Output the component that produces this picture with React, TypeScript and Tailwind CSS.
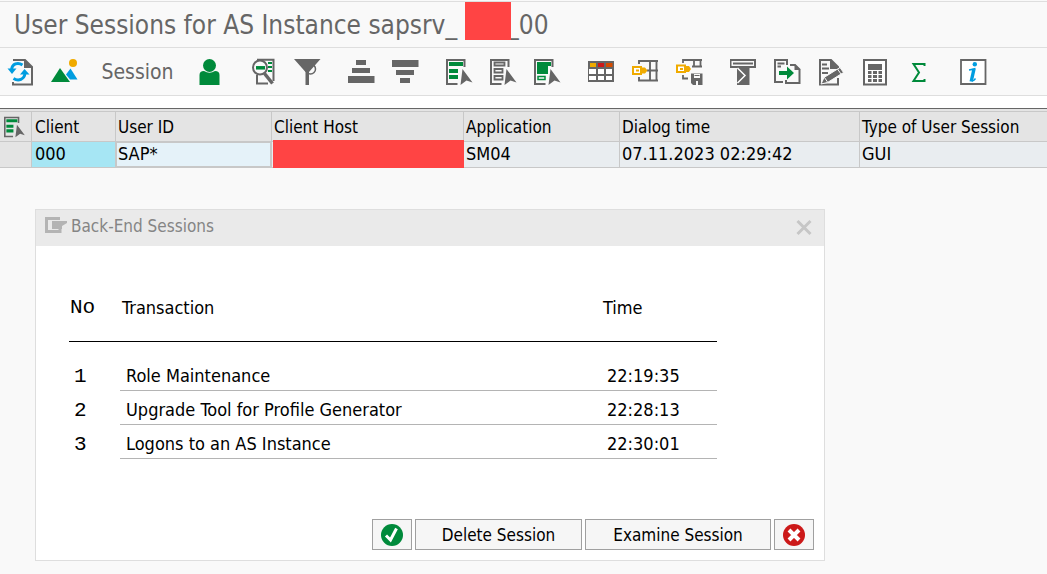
import React from 'react'

const Icon = ({ children }: { children: React.ReactNode }) => (
  <svg width="28" height="28" viewBox="0 0 28 28" fill="none" aria-hidden="true">
    {children}
  </svg>
)

const gray = '#666666'
const green = '#008a3b'
const blue = '#009de0'
const amber = '#f0ab00'

const Cursor = () => (
  <path d="M16.5 11L26.5 24.5L20.5 22.5L14.5 27Z" fill={gray} />
)

const SheetOutline = () => (
  <path d="M18.5 9V2H1V26H11.5" stroke={gray} strokeWidth="2" />
)

const RefreshIcon = () => (
  <Icon>
    <path d="M6 2H18L25 9V26.500H6V24" stroke={gray} strokeWidth="2" />
    <path d="M17 1L26 10H17Z" fill={gray} />
    <path d="M4.500 12C5 5.500 11 4 15.500 7" stroke={blue} strokeWidth="3" />
    <path d="M0.500 10.500H9.500L5 16Z" fill={blue} />
    <path d="M18 15C17.500 21.500 11.500 23.500 6.500 20.500" stroke={blue} strokeWidth="3" />
    <path d="M13 16.500H22.500L17.500 11Z" fill={blue} />
  </Icon>
)

const PictureIcon = () => (
  <Icon>
    <path d="M0 24L9 10L19 24Z" fill={green} />
    <path d="M15 16.500L19.500 10.500L26.500 21.500H19Z" fill={blue} />
    <circle cx="22" cy="5" r="4" fill={amber} />
  </Icon>
)

const UserIcon = () => (
  <Icon>
    <circle cx="13.500" cy="7.500" r="6.500" fill={green} />
    <path d="M3.500 27V17Q3.500 13 8 13Q13.500 16.500 19 13Q23.500 13 23.500 17V27Z" fill={green} />
  </Icon>
)

const DetailsIcon = () => (
  <Icon>
    <path d="M7 1.800H23.500V23M7 17V25.500H18" stroke={gray} strokeWidth="2" />
    <path d="M18 5H22M18 9H22M18 13H22" stroke={green} strokeWidth="2" />
    <circle cx="10" cy="9.500" r="7" fill="#f9f9f9" stroke={gray} strokeWidth="2" />
    <path d="M6 9.800H15" stroke={green} strokeWidth="3.500" />
    <path d="M14.500 15.500L22.500 25.500" stroke={gray} strokeWidth="3.500" />
  </Icon>
)

const FilterIcon = () => (
  <Icon>
    <circle cx="16.500" cy="11" r="5" stroke={gray} strokeWidth="1.500" />
    <path d="M0 1H26.500L15 14V27H11.500V14Z" fill={gray} />
  </Icon>
)

const AscendingIcon = () => (
  <Icon>
    <path d="M8 2H18V7H8ZM4 10H22V15H4ZM0 18H26.500V25H0Z" fill={gray} />
  </Icon>
)

const DescendingIcon = () => (
  <Icon>
    <path d="M0 2H26.500V9H0ZM4 12H22V17H4ZM8 20H18V25H8Z" fill={gray} />
  </Icon>
)

const SelectAllIcon = () => (
  <Icon>
    <SheetOutline />
    <path d="M3 4H17V8H3ZM3 11H12V15H3ZM3 17H12V21H3Z" fill={green} />
    <Cursor />
  </Icon>
)

const DeselectAllIcon = () => (
  <Icon>
    <SheetOutline />
    <path d="M4.500 4.500H14.500V7.500H4.500ZM4.500 11H12.500V14.500H4.500ZM4.500 18H12.500V21.500H4.500Z" stroke={gray} strokeWidth="1.800" />
    <Cursor />
  </Icon>
)

const SelectBlockIcon = () => (
  <Icon>
    <SheetOutline />
    <path d="M3 4H17V8H14V16H3Z" fill={green} />
    <path d="M4 18.500H11V21.500H4Z" stroke={green} strokeWidth="1.500" />
    <Cursor />
  </Icon>
)

const LayoutIcon = () => (
  <Icon>
    <path d="M-1 3H26V24H-1Z" fill={gray} />
    <path d="M2 5H8V9H2Z" fill={amber} />
    <path d="M10 5H16V9H10Z" fill="#cc1919" />
    <path d="M18 5H24.500V9H18Z" fill="#d64c00" />
    <path d="M1 11H8V16H1ZM10 11H16V16H10ZM18 11H24V16H18ZM1 18H8V22H1ZM10 18H16V22H10ZM18 18H24V22H18Z" fill="#fff" />
  </Icon>
)

const ChooseLayoutIcon = () => (
  <Icon>
    <path d="M7 6V3H26M7 19V22.500H26M15 12.500H26M18 2V23M24.500 2V23" stroke={gray} strokeWidth="1.900" />
    <path d="M1 9H9V16H1Z" fill="#fff" stroke={amber} strokeWidth="2" />
    <path d="M4 11.500H7V13.500H4ZM9 9.500H13L15.500 12.500L13 15.500H9Z" fill={amber} />
  </Icon>
)

const SaveLayoutIcon = () => (
  <Icon>
    <path d="M7 5V2H26M18 1V8M24.500 1V9M16 8.500H26M7 17V20.500H12" stroke={gray} strokeWidth="1.800" />
    <path d="M1 7.500H9V14H1Z" fill="#fff" stroke={amber} strokeWidth="2" />
    <path d="M4 10H7V12H4ZM9 8H13L15 11L13 14H9Z" fill={amber} />
    <path d="M15 15.500H26.500V27H17L15 25Z" fill={gray} />
    <path d="M18 16H24V20H18ZM20 23H22V27H20Z" fill="#f9f9f9" />
    <path d="M18.500 17.500H23.500" stroke={gray} />
  </Icon>
)

const PrintIcon = () => (
  <Icon>
    <path d="M0.500 2H25V9H0.500Z" stroke={gray} strokeWidth="2" />
    <path d="M3 5.500H23" stroke={gray} strokeWidth="2" />
    <path d="M7 8H19.500V27H7Z" fill={gray} />
    <path d="M7.500 10L15 17.500L7.500 25" stroke="#fff" strokeWidth="1.500" />
  </Icon>
)

const ExportIcon = () => (
  <Icon>
    <path d="M13 7V2H1V24H9M3.500 5.500H10.500M3.500 8.500H7" stroke={gray} strokeWidth="2" />
    <path d="M16 7H21L25.500 11.500V25H12V22" stroke={gray} strokeWidth="2" />
    <path d="M20.500 6L26.500 12H20.500Z" fill={gray} />
    <path d="M5 13H13V8.500L20 15L13 21.500V17H5Z" fill={green} />
  </Icon>
)

const EditIcon = () => (
  <Icon>
    <path d="M20 12V9L13 2H2V26.500H20V20" stroke={gray} strokeWidth="2" />
    <path d="M12 1L21 11H12ZM4 5.500H9V7.500H4ZM4 9.500H11V11.500H4ZM4 14H10V16H4Z" fill={gray} />
    <path d="M3 26L6 19.500L22 9.500L25.500 14.500L9.500 24.500Z" fill={gray} stroke="#f9f9f9" />
    <path d="M6.500 19.500L9.500 24M19.500 11L23 16" stroke="#f9f9f9" />
  </Icon>
)

const CalculatorIcon = () => (
  <Icon>
    <path d="M2 2H24V26.500H2Z" fill="#fff" stroke={gray} strokeWidth="2" />
    <path d="M6 6H20V12H6Z" fill={gray} />
    <path d="M6 13H9.500V16H6ZM11 13H15V16H11ZM16.500 13H20V16H16.500ZM6 17H9.500V20H6ZM11 17H15V20H11ZM16.500 17H20V20H16.500ZM6 21H9.500V24H6ZM11 21H15V24H11ZM16.500 21H20V24H16.500Z" fill={gray} />
  </Icon>
)

const SumIcon = () => (
  <Icon>
    <path d="M18.500 8V6H7.500L13 14.500L7.500 23H18.500V21" stroke={green} strokeWidth="2" />
  </Icon>
)

const InfoIcon = () => (
  <Icon>
    <path d="M1 2H25.500V26H1Z" fill="#fff" stroke={gray} strokeWidth="1.800" />
    <circle cx="14.800" cy="6.300" r="2.200" fill={blue} />
    <path d="M9 12Q12.500 11.500 15.500 10.500M11.500 22Q13 24 15.500 20.500" stroke={blue} strokeWidth="1.400" />
    <path d="M14 11L11.200 23.500" stroke={blue} strokeWidth="3.400" />
  </Icon>
)

interface Tool {
  label: string;
  icon: () => React.JSX.Element;
}

const leadingTools: Tool[] = [
  { label: 'Refresh', icon: RefreshIcon },
  { label: 'Display', icon: PictureIcon },
]

const toolGroups: Tool[][] = [
  [{ label: 'User', icon: UserIcon }],
  [
    { label: 'Details', icon: DetailsIcon },
    { label: 'Filter', icon: FilterIcon },
  ],
  [
    { label: 'Sort ascending', icon: AscendingIcon },
    { label: 'Sort descending', icon: DescendingIcon },
  ],
  [
    { label: 'Select all', icon: SelectAllIcon },
    { label: 'Deselect all', icon: DeselectAllIcon },
    { label: 'Select block', icon: SelectBlockIcon },
  ],
  [
    { label: 'Change layout', icon: LayoutIcon },
    { label: 'Choose layout', icon: ChooseLayoutIcon },
    { label: 'Save layout', icon: SaveLayoutIcon },
  ],
  [
    { label: 'Print', icon: PrintIcon },
    { label: 'Export', icon: ExportIcon },
    { label: 'Edit', icon: EditIcon },
    { label: 'Calculate', icon: CalculatorIcon },
    { label: 'Total', icon: SumIcon },
  ],
  [{ label: 'Information', icon: InfoIcon }],
]

const backEndSessions = [
  { no: 1, transaction: 'Role Maintenance', time: '22:19:35' },
  { no: 2, transaction: 'Upgrade Tool for Profile Generator', time: '22:28:13' },
  { no: 3, transaction: 'Logons to an AS Instance', time: '22:30:01' },
]

const ToolGroup = ({ tools }: { tools: Tool[] }) => (
  <div className="flex gap-4">
    {tools.map(({ label, icon: ToolIcon }) => (
      <button key={label} type="button" aria-label={label} className="size-7 shrink-0">
        <ToolIcon />
      </button>
    ))}
  </div>
)

const Toolbar = () => (
  <div className="flex h-12 border-b border-[#dedede] pt-2.5 pl-[7px]">
    <ToolGroup tools={leadingTools} />
    <button type="button" className="h-7 w-[117px] shrink-0 text-[21px] leading-7 text-[#666]">
      Session
    </button>
    <div className="flex gap-[26px]">
      {toolGroups.map((tools) => (
        <ToolGroup key={tools[0].label} tools={tools} />
      ))}
    </div>
  </div>
)

const SessionsTable = () => (
  <table className="w-full table-fixed border-separate border-spacing-0 border-t border-[#c8c8c8] text-left whitespace-nowrap">
    <colgroup>
      <col className="w-8" />
      <col className="w-[84px]" />
      <col className="w-[156px]" />
      <col className="w-[192px]" />
      <col className="w-[156px]" />
      <col className="w-[240px]" />
      <col />
    </colgroup>
    <thead>
      <tr className="h-[30px] bg-[#e4e4e4] text-[17px] leading-6 *:border-b *:border-[#c8c8c8] *:p-0 *:font-normal">
        <th className="border-r">
          <button type="button" aria-label="Select all rows" className="ml-1 block size-6 pt-px">
            <svg width="22" height="22" viewBox="0 0 28 28" fill="none" aria-hidden="true">
              <SheetOutline />
              <path d="M3 4H17V8H3ZM3 11H12V15H3ZM3 17H12V21H3Z" fill={green} />
              <Cursor />
            </svg>
          </button>
        </th>
        <th className="border-r"><span className="pl-[3px]">Client</span></th>
        <th className="border-r"><span className="pl-0.5">User ID</span></th>
        <th className="border-r"><span className="pl-0.5">Client Host</span></th>
        <th className="border-r"><span className="pl-0.5">Application</span></th>
        <th className="border-r"><span className="pl-0.5">Dialog time</span></th>
        <th><span className="pl-0.5">Type of User Session</span></th>
      </tr>
    </thead>
    <tbody>
      <tr className="h-[26px] bg-[#e9edf0] text-[18px] leading-[22px] *:border-b *:border-[#c8c8c8] *:p-0 *:pb-0.5">
        <td className="border-r bg-[#e4e4e4]"></td>
        <td className="border-r bg-[#a6e6f4]"><span className="pl-[3px]">000</span></td>
        <td className="border-r bg-[#e5f2f9] shadow-[inset_0_0_0_1px_#c8c8c8]"><span className="pl-0.5">SAP*</span></td>
        <td className="relative">
          <span className="absolute -top-0.5 -bottom-px left-px right-0 bg-[#ff4444]"></span>
        </td>
        <td className="border-r"><span className="pl-0.5">SM04</span></td>
        <td className="border-r"><span className="pl-0.5">07.11.2023 02:29:42</span></td>
        <td><span className="pl-0.5">GUI</span></td>
      </tr>
    </tbody>
  </table>
)

const DialogButton = ({ className, label, children }: { className: string; label?: string; children: React.ReactNode }) => (
  <button
    type="button"
    aria-label={label}
    className={`flex h-[31px] items-center justify-center border border-[#a0a0a0] bg-[#f6f6f6] text-[17px] leading-6 ${className}`}
  >
    {children}
  </button>
)

const BackEndSessions = () => (
  <section className="mt-[41px] ml-[35px] max-w-[790px] border border-[#dedede] bg-white" role="dialog" aria-labelledby="dialog-title">
    <header className="flex h-9 items-start bg-[#eaeaea] pl-2 pr-3">
      <svg className="mt-[7px]" width="24" height="18" viewBox="0 0 24 18" fill="none" aria-hidden="true">
        <path d="M16 1.500H2.500V14.500H16V12" stroke="#b4b4b4" strokeWidth="3" />
        <path d="M8 4H23V6L18 9V12H8Z" fill="#b4b4b4" />
      </svg>
      <h2 id="dialog-title" className="ml-[3px] pt-1 text-[17px] leading-6 text-[#858585]">Back-End Sessions</h2>
      <button type="button" aria-label="Close" className="mt-[9px] ml-auto">
        <svg width="16" height="17" viewBox="0 0 16 17" fill="none" aria-hidden="true">
          <path d="M1.500 2L14.500 15M14.500 2L1.500 15" stroke="#c6c6c6" strokeWidth="3" />
        </svg>
      </button>
    </header>

    <div className="pt-[52px] pr-[107px] pl-[33px]">
      <table className="w-full table-fixed border-separate border-spacing-0 text-left text-[18px] leading-5">
        <colgroup>
          <col className="w-[51px]" />
          <col />
          <col className="w-[116px]" />
        </colgroup>
        <thead>
          <tr className="*:border-b *:border-black *:pb-[23px] *:font-normal">
            <th className="pl-px font-['Liberation_Mono',monospace] text-[21px]">No</th>
            <th className="pl-0.5">Transaction</th>
            <th className="pl-0.5">Time</th>
          </tr>
        </thead>
        <tbody>
          {backEndSessions.map((session) => (
            <tr key={session.no} className="h-[34px] *:pb-1 *:align-bottom first:h-[49px]">
              <td className="pl-[5px] font-['Liberation_Mono',monospace] text-[21px]">{session.no}</td>
              <td className="border-b border-[#b4b4b4] pl-1.5">{session.transaction}</td>
              <td className="border-b border-[#b4b4b4] pl-1.5">{session.time}</td>
            </tr>
          ))}
        </tbody>
      </table>
    </div>

    <footer className="flex justify-end gap-[3px] pt-[60px] pr-2.5 pb-2.5">
      <DialogButton className="w-10" label="Confirm">
        <svg width="22" height="22" viewBox="0 0 22 22" fill="none" aria-hidden="true">
          <circle cx="11" cy="11" r="11" fill={green} />
          <path d="M5 11.500L9.500 16L15.500 4.500" stroke="#fff" strokeWidth="3" />
        </svg>
      </DialogButton>
      <DialogButton className="w-[167px]">Delete Session</DialogButton>
      <DialogButton className="w-[186px]">Examine Session</DialogButton>
      <DialogButton className="w-10" label="Cancel">
        <svg width="22" height="22" viewBox="0 0 22 22" fill="none" aria-hidden="true">
          <circle cx="11" cy="11" r="11" fill="#cc1919" />
          <path d="M6 6L16 16M16 6L6 16" stroke="#fff" strokeWidth="4" />
        </svg>
      </DialogButton>
    </footer>
  </section>
)

const App = () => (
  <main className="min-h-screen bg-[#f9f9f9] pt-px font-['DejaVu_Sans_Condensed','DejaVu_Sans',sans-serif] text-black">
    <h1 className="flex h-[47px] gap-2 border-y border-[#dedede] pl-[14px] text-[26px] leading-[46px] whitespace-nowrap text-[#666]">
      <span>User Sessions for AS Instance sapsrv_</span>
      <span className="z-10 h-[38px] w-[46px] bg-[#ff4444]"></span>
      <span className="-ml-3">_00</span>
    </h1>
    <Toolbar />
    <div className="h-3 bg-white"></div>
    <div className="h-[3px] border-t border-[#666] bg-[#e4e4e4]"></div>
    <SessionsTable />
    <BackEndSessions />
  </main>
)

export default App
